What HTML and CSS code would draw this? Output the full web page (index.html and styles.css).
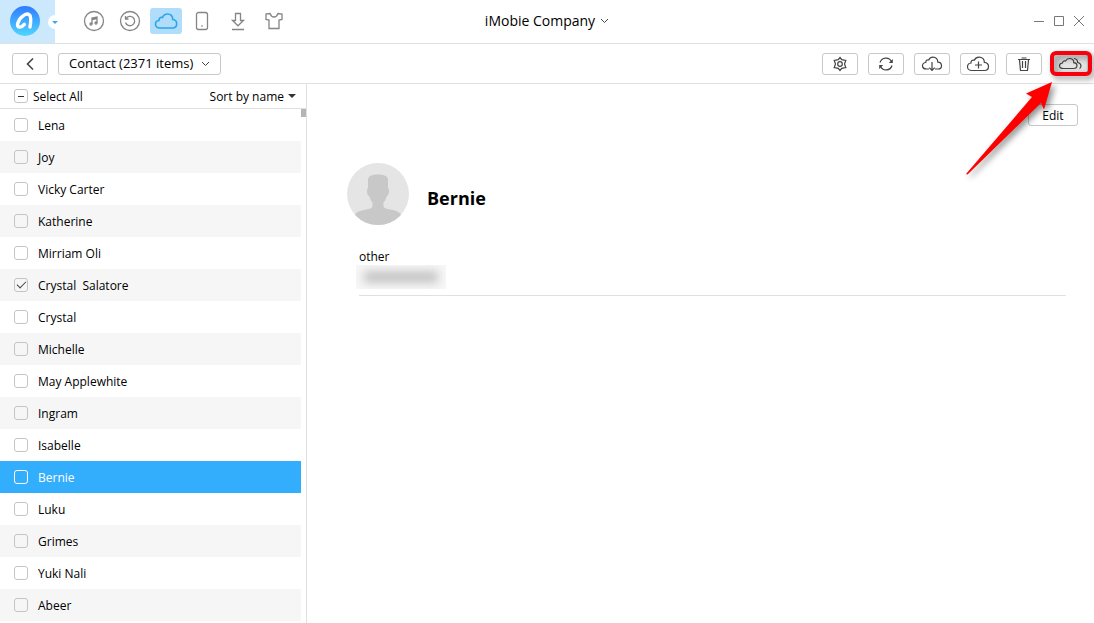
FILE: index.html
```html
<!DOCTYPE html>
<html lang="en">
<head>
<meta charset="utf-8">
<meta name="viewport" content="width=device-width, initial-scale=1">
<title>iMobie Company</title>
<link rel="stylesheet" href="styles.css">
</head>
<body>
<header class="titlebar">
  <button class="brand" aria-label="Switch device">
    <svg width="30" height="30" viewBox="0 0 30 30">
      <defs><linearGradient id="brand-fill" x1="0" y1="0" x2="0" y2="1"><stop offset="0" stop-color="#2f7bff"/><stop offset="1" stop-color="#4fd6ff"/></linearGradient></defs>
      <circle cx="15" cy="15" r="15" fill="url(#brand-fill)"/>
      <path d="M20 21C20.800 16.500 21.300 11.500 19.800 9.300C17 5.800 9.500 11 7.800 17.300C6.500 22 10.800 22.500 14.300 18.300" fill="none" stroke="#fff" stroke-width="3.400" stroke-linecap="round" stroke-linejoin="round"/>
    </svg>
    <span class="brand-notch"></span>
  </button>
  <nav class="tabs" aria-label="Sections">
    <button class="tab" aria-label="Music"><svg width="22" height="22" viewBox="0 0 22 22"><circle cx="11" cy="11" r="9.500"/><path d="M9 14V8l5-1v6M9 9.500l5-1"/><circle cx="8" cy="14" r="1"/><circle cx="13" cy="13" r="1"/></svg></button>
    <button class="tab" aria-label="Backups"><svg width="22" height="22" viewBox="0 0 22 22"><circle cx="11" cy="11" r="9.500"/><path d="M7 8.500A4.700 4.700 0 1 1 6.500 12.500M6.500 6v3h3"/></svg></button>
    <button class="tab tab-active" aria-label="iCloud"><svg width="24" height="18" viewBox="0 0 24 18"><path d="M6 16C3 16 1.500 14.300 1.500 12.200C1.500 10 3 8.700 5 8.500C4.800 5.800 6.500 5 8.500 5.500C9.500 3 11.500 2 13.500 2C17 2 19 4.500 18.700 7.500C21.300 7.800 22.700 9.500 22.700 11.800C22.700 14.300 21 16 18.500 16Z"/></svg></button>
    <button class="tab" aria-label="Device"><svg width="22" height="22" viewBox="0 0 22 22"><rect x="5.500" y="2.500" width="11" height="17" rx="2"/><path d="M10.300 16h1.400"/></svg></button>
    <button class="tab" aria-label="Download"><svg width="22" height="22" viewBox="0 0 22 22"><path d="M8.500 3.500h5v7h3L11 15.800 5.500 10.500h3zM5 19.500h12"/></svg></button>
    <button class="tab" aria-label="Skins"><svg width="22" height="22" viewBox="0 0 22 22"><path d="M7 3.500L3 4v5.500l3 .5v8.500h10V10l3-.5V4l-4-.5C14 6.200 12.500 7 11 7S8 6.200 7 3.500Z"/></svg></button>
  </nav>
  <button class="account">iMobie Company <svg width="9" height="6" viewBox="0 0 9 6"><path d="M1 1l3.500 3.500L8 1"/></svg></button>
  <div class="window-controls">
    <button aria-label="Minimize"><svg width="12" height="12" viewBox="0 0 12 12"><path d="M1 6.500h10"/></svg></button>
    <button aria-label="Maximize"><svg width="12" height="12" viewBox="0 0 12 12"><path d="M1.500 1.500h9v9h-9z"/></svg></button>
    <button aria-label="Close"><svg width="12" height="12" viewBox="0 0 12 12"><path d="M1 1l10 10M11 1L1 11"/></svg></button>
  </div>
</header>

<div class="toolbar">
  <button class="btn tool" aria-label="Back"><svg width="18" height="18" viewBox="0 0 18 18" class="back"><path d="M12 3.500L6.500 9l5.500 5.500"/></svg></button>
  <button class="btn category">Contact (2371 items) <svg width="9" height="6" viewBox="0 0 9 6"><path d="M1 1l3.500 3.500L8 1"/></svg></button>
  <div class="tools">
    <button class="btn tool" aria-label="Settings"><svg width="18" height="18" viewBox="0 0 18 18"><path d="M9 2.500L10.700 4.600 14.800 5.500 13.500 9 14.800 12.500 10.700 13.400 9 15.500 7.300 13.400 3.200 12.500 4.500 9 3.200 5.500 7.300 4.600Z"/><circle cx="9" cy="9" r="2.300"/></svg></button>
    <button class="btn tool" aria-label="Refresh"><svg width="18" height="18" viewBox="0 0 18 18"><path d="M3 7.500A6.200 6.200 0 0 1 14.500 6.500M15 10.500A6.200 6.200 0 0 1 3.500 11.500"/><path class="solid" d="M15.800 4v4h-4zM2.200 14v-4h4z"/></svg></button>
    <button class="btn tool" aria-label="Download from cloud"><svg width="22" height="18" viewBox="0 0 22 18"><path d="M8 14H5.500C3 14 1.500 12.500 1.500 10.700C1.500 8.800 3 7.500 4.800 7.500C4.800 5.300 6 4.800 7.700 5C8.700 3 10.200 2.200 12 2.200C15 2.200 17 4.300 16.800 7.200C19 7.300 20.500 8.500 20.500 10.700C20.500 12.700 19 14 17 14H14"/><path d="M11 7v8.500M8.300 12.700L11 15.500l2.700-2.800"/></svg></button>
    <button class="btn tool" aria-label="Add to cloud"><svg width="24" height="18" viewBox="0 0 24 18"><path d="M6 15.500C3 15.500 1.500 13.800 1.500 11.700C1.500 9.700 3 8.300 5 8C4.800 5.500 6.500 4.800 8.300 5.200C9.500 3 11 2.200 13 2.200C16.500 2.200 18.500 4.500 18.300 7.300C21 7.500 22.500 9 22.500 11.500C22.500 14 21 15.500 18.500 15.500Z"/><path d="M9 10h7M12.500 6.500v7"/></svg></button>
    <button class="btn tool" aria-label="Delete"><svg width="18" height="18" viewBox="0 0 18 18"><path d="M3 4.500h12M6.500 3h5M4.500 5l1 10.500h7l1-10.500M7.500 6v7M10.500 6v7"/></svg></button>
    <button class="btn tool tool-pressed" aria-label="Transfer to another cloud"><svg width="26" height="16" viewBox="0 0 26 16"><path d="M6.500 12.500C4 12.500 2.500 11.500 2.500 9.700C2.500 8.200 3.800 7.200 5.500 7C5.500 5.200 7 4.600 8.500 5C9.500 3.100 11 2.500 12.500 2.500C15.300 2.500 17 4.300 16.700 6.600C18.700 6.800 20 7.800 20 9.600C20 11.500 18.500 12.500 16.500 12.500Z"/><path d="M17 2.500C19.500 2.700 20.800 4.500 20.600 6.500C22.800 7 24 8 24 10C24 11 23.500 12 22.500 12.500"/></svg>
      <svg class="callout" width="132" height="132" viewBox="960 48 132 132" aria-hidden="true"><rect class="callout-ring" x="1052" y="53" width="38" height="21" rx="4"/><path class="callout-arrow" d="M1052 82L1026 93.500 1032 97 966 174 967.500 174.500 1041 103 1044 109.500Z"/></svg>
    </button>
  </div>
</div>

<main class="workspace">
  <section class="sidebar" aria-label="Contacts">
    <div class="list-head">
      <label class="select-all"><input type="checkbox" class="check check-partial">Select All</label>
      <button class="sort">Sort by name <span class="caret"></span></button>
    </div>
    <div class="list-body">
      <ul class="contacts">
        <li><label class="contact"><input type="checkbox" class="check">Lena</label></li>
        <li><label class="contact"><input type="checkbox" class="check">Joy</label></li>
        <li><label class="contact"><input type="checkbox" class="check">Vicky Carter</label></li>
        <li><label class="contact"><input type="checkbox" class="check">Katherine</label></li>
        <li><label class="contact"><input type="checkbox" class="check">Mirriam Oli</label></li>
        <li><label class="contact"><input type="checkbox" class="check" checked>Crystal&nbsp; Salatore</label></li>
        <li><label class="contact"><input type="checkbox" class="check">Crystal</label></li>
        <li><label class="contact"><input type="checkbox" class="check">Michelle</label></li>
        <li><label class="contact"><input type="checkbox" class="check">May Applewhite</label></li>
        <li><label class="contact"><input type="checkbox" class="check">Ingram</label></li>
        <li><label class="contact"><input type="checkbox" class="check">Isabelle</label></li>
        <li class="selected"><label class="contact"><input type="checkbox" class="check">Bernie</label></li>
        <li><label class="contact"><input type="checkbox" class="check">Luku</label></li>
        <li><label class="contact"><input type="checkbox" class="check">Grimes</label></li>
        <li><label class="contact"><input type="checkbox" class="check">Yuki Nali</label></li>
        <li><label class="contact"><input type="checkbox" class="check">Abeer</label></li>
      </ul>
      <div class="scroll-thumb"></div>
    </div>
  </section>

  <article class="detail">
    <div class="detail-actions"><button class="btn edit">Edit</button></div>
    <div class="identity">
      <svg class="avatar" width="62" height="62" viewBox="0 0 62 62" aria-hidden="true">
        <defs><clipPath id="avatar-clip"><circle cx="31" cy="31" r="31"/></clipPath></defs>
        <g clip-path="url(#avatar-clip)"><path fill="#e5e5e5" d="M0 0h62v62H0z"/><path fill="#c8c8c8" d="M21 17C21 13 25 11.500 31 11.500S41 13 41 17V25C43 26 42 33 39.500 33.500C39 36 38 38 36.500 39.500V43C37 46.500 43 46 48 47.500C53 49 55 52 56 56V62H6V56C7 51 10 48.500 15 47.500C20 46 25 46.500 25.500 43V39.500C24 38 23 36 22.500 33.500C20 33 19 26 21 25Z"/></g>
      </svg>
      <h1 class="name">Bernie</h1>
    </div>
    <div class="field">
      <div class="field-label">other</div>
      <div class="redacted"><div class="redacted-ink"></div></div>
    </div>
  </article>
</main>
</body>
</html>
```
FILE: styles.css
```css
* { box-sizing: border-box; }

body {
  margin: 0;
  min-height: 100vh;
  display: flex;
  flex-direction: column;
  background: #fff;
  color: #000;
  font: 12px/17px "Open Sans", "Noto Sans", sans-serif;
}

button {
  margin: 0;
  padding: 0;
  border: 0;
  background: none;
  color: inherit;
  font: inherit;
}

svg {
  display: block;
  flex: none;
  fill: none;
  stroke: #444;
}

.titlebar {
  height: 44px;
  display: grid;
  grid-template-columns: 1fr auto 1fr;
  grid-template-areas: "nav account controls";
  align-items: center;
  border-bottom: 1px solid #e0e0e0;
}

.brand {
  grid-area: nav;
  position: relative;
  width: 55px;
  height: 43px;
  padding: 0 0 2px 10px;
  display: flex;
  align-items: center;
  background: #cce8fd;
}
.brand svg { stroke: none; }

.brand-notch {
  position: absolute;
  right: -7px;
  top: 15px;
  width: 14px;
  height: 14px;
  border-radius: 50%;
  background: #fff;
}
.brand-notch::after {
  content: "";
  position: absolute;
  left: 4px;
  top: 6px;
  border: 3px solid transparent;
  border-top-color: #36aef5;
  border-bottom: 0;
}

.tabs {
  grid-area: nav;
  display: flex;
  gap: 4px;
  margin-left: 78px;
  padding-bottom: 2px;
}
.tab {
  width: 32px;
  height: 26px;
  display: flex;
  align-items: center;
  justify-content: center;
  border-radius: 3px;
}
.tab svg { stroke: #858585; stroke-width: 1.3; }
.tab-active { background: #afddfa; }
.tab-active svg { stroke: #2ba5f0; stroke-width: 1.6; }

.account {
  grid-area: account;
  display: flex;
  align-items: center;
  gap: 5px;
  padding-bottom: 2px;
  font-size: 14px;
  line-height: 20px;
}

.window-controls {
  grid-area: controls;
  justify-self: end;
  display: flex;
  gap: 8px;
  padding: 0 9px 2px 0;
}
.window-controls svg { stroke: #777; }

.toolbar {
  height: 40px;
  display: flex;
  align-items: center;
  gap: 10px;
  padding: 0 6px 0 12px;
  border-bottom: 1px solid #e0e0e0;
}
.tools {
  display: flex;
  gap: 10px;
  margin-left: auto;
}

.btn {
  height: 22px;
  display: flex;
  align-items: center;
  justify-content: center;
  border: 1px solid #c8c8c8;
  border-radius: 3px;
  background: #fff;
}
.tool { width: 36px; }
.tool svg { stroke-width: 1.2; }
.tool .back { stroke-width: 1.6; }
.solid { fill: #444; stroke: none; }
.category {
  padding: 0 10px;
  gap: 8px;
  font-size: 13px;
}
.tool-pressed {
  position: relative;
  background: #e4e4e4;
}

.tool .callout {
  position: absolute;
  right: -5px;
  top: -6px;
  z-index: 1;
  stroke-width: 4;
  pointer-events: none;
  filter: drop-shadow(3px 3px 3px rgba(0, 0, 0, 0.45));
}
.callout-ring { stroke: #f8000c; }
.callout-arrow { fill: #f00; stroke: none; }

.workspace {
  flex: 1;
  display: flex;
}

.sidebar {
  flex: 0 0 307px;
  border-right: 1px solid #e0e0e0;
}
.list-head {
  height: 25px;
  display: flex;
  align-items: center;
  justify-content: space-between;
  padding: 0 10px 0 14px;
  border-bottom: 1px solid #e0e0e0;
}
.select-all {
  display: flex;
  align-items: center;
  gap: 5px;
}
.sort {
  display: flex;
  align-items: center;
  gap: 4px;
}
.caret {
  border: 4px solid transparent;
  border-top-color: #333;
  border-bottom: 0;
}

.list-body { display: flex; }
.contacts {
  flex: 1;
  margin: 0;
  padding: 0;
  list-style: none;
}
.contacts li:nth-child(even) { background: #f6f6f6; }
.contacts .selected:nth-child(n) {
  background: #33aefc;
  color: #fff;
}
.contact {
  height: 32px;
  display: flex;
  align-items: center;
  gap: 10px;
  padding-left: 14px;
}
.scroll-thumb {
  width: 5px;
  height: 8px;
  background: #b5b5b5;
}

.check {
  appearance: none;
  flex: none;
  width: 14px;
  height: 14px;
  margin: 0;
  display: grid;
  place-items: center;
  border: 1px solid #c4c4c4;
  border-radius: 3px;
}
.selected .check { border-color: #fff; }
.check-partial::before {
  content: "";
  width: 6px;
  height: 1px;
  background: #333;
}
.check:checked::before {
  content: "";
  width: 8px;
  height: 4px;
  margin-bottom: 3px;
  border: solid #444;
  border-width: 0 0 1px 1px;
  transform: rotate(-45deg);
}

.detail {
  flex: 1;
  padding: 20px 16px 0 40px;
}
.detail-actions {
  display: flex;
  justify-content: flex-end;
}
.edit { width: 50px; }
.identity {
  display: flex;
  align-items: center;
  gap: 18px;
  margin-top: 37px;
}
.avatar { stroke: none; }
.name {
  margin: 8px 0 0;
  font-size: 18px;
  line-height: 24px;
}
.field {
  margin: 23px 12px 0;
  padding-bottom: 6px;
  border-bottom: 1px solid #e0e0e0;
}
.redacted {
  width: 90px;
  height: 24px;
  margin-left: -3px;
  padding: 6px 8px;
  overflow: hidden;
  background: #f7f7f7;
}
.redacted-ink {
  height: 12px;
  background: #c4c4c4;
  filter: blur(5px);
}
```
